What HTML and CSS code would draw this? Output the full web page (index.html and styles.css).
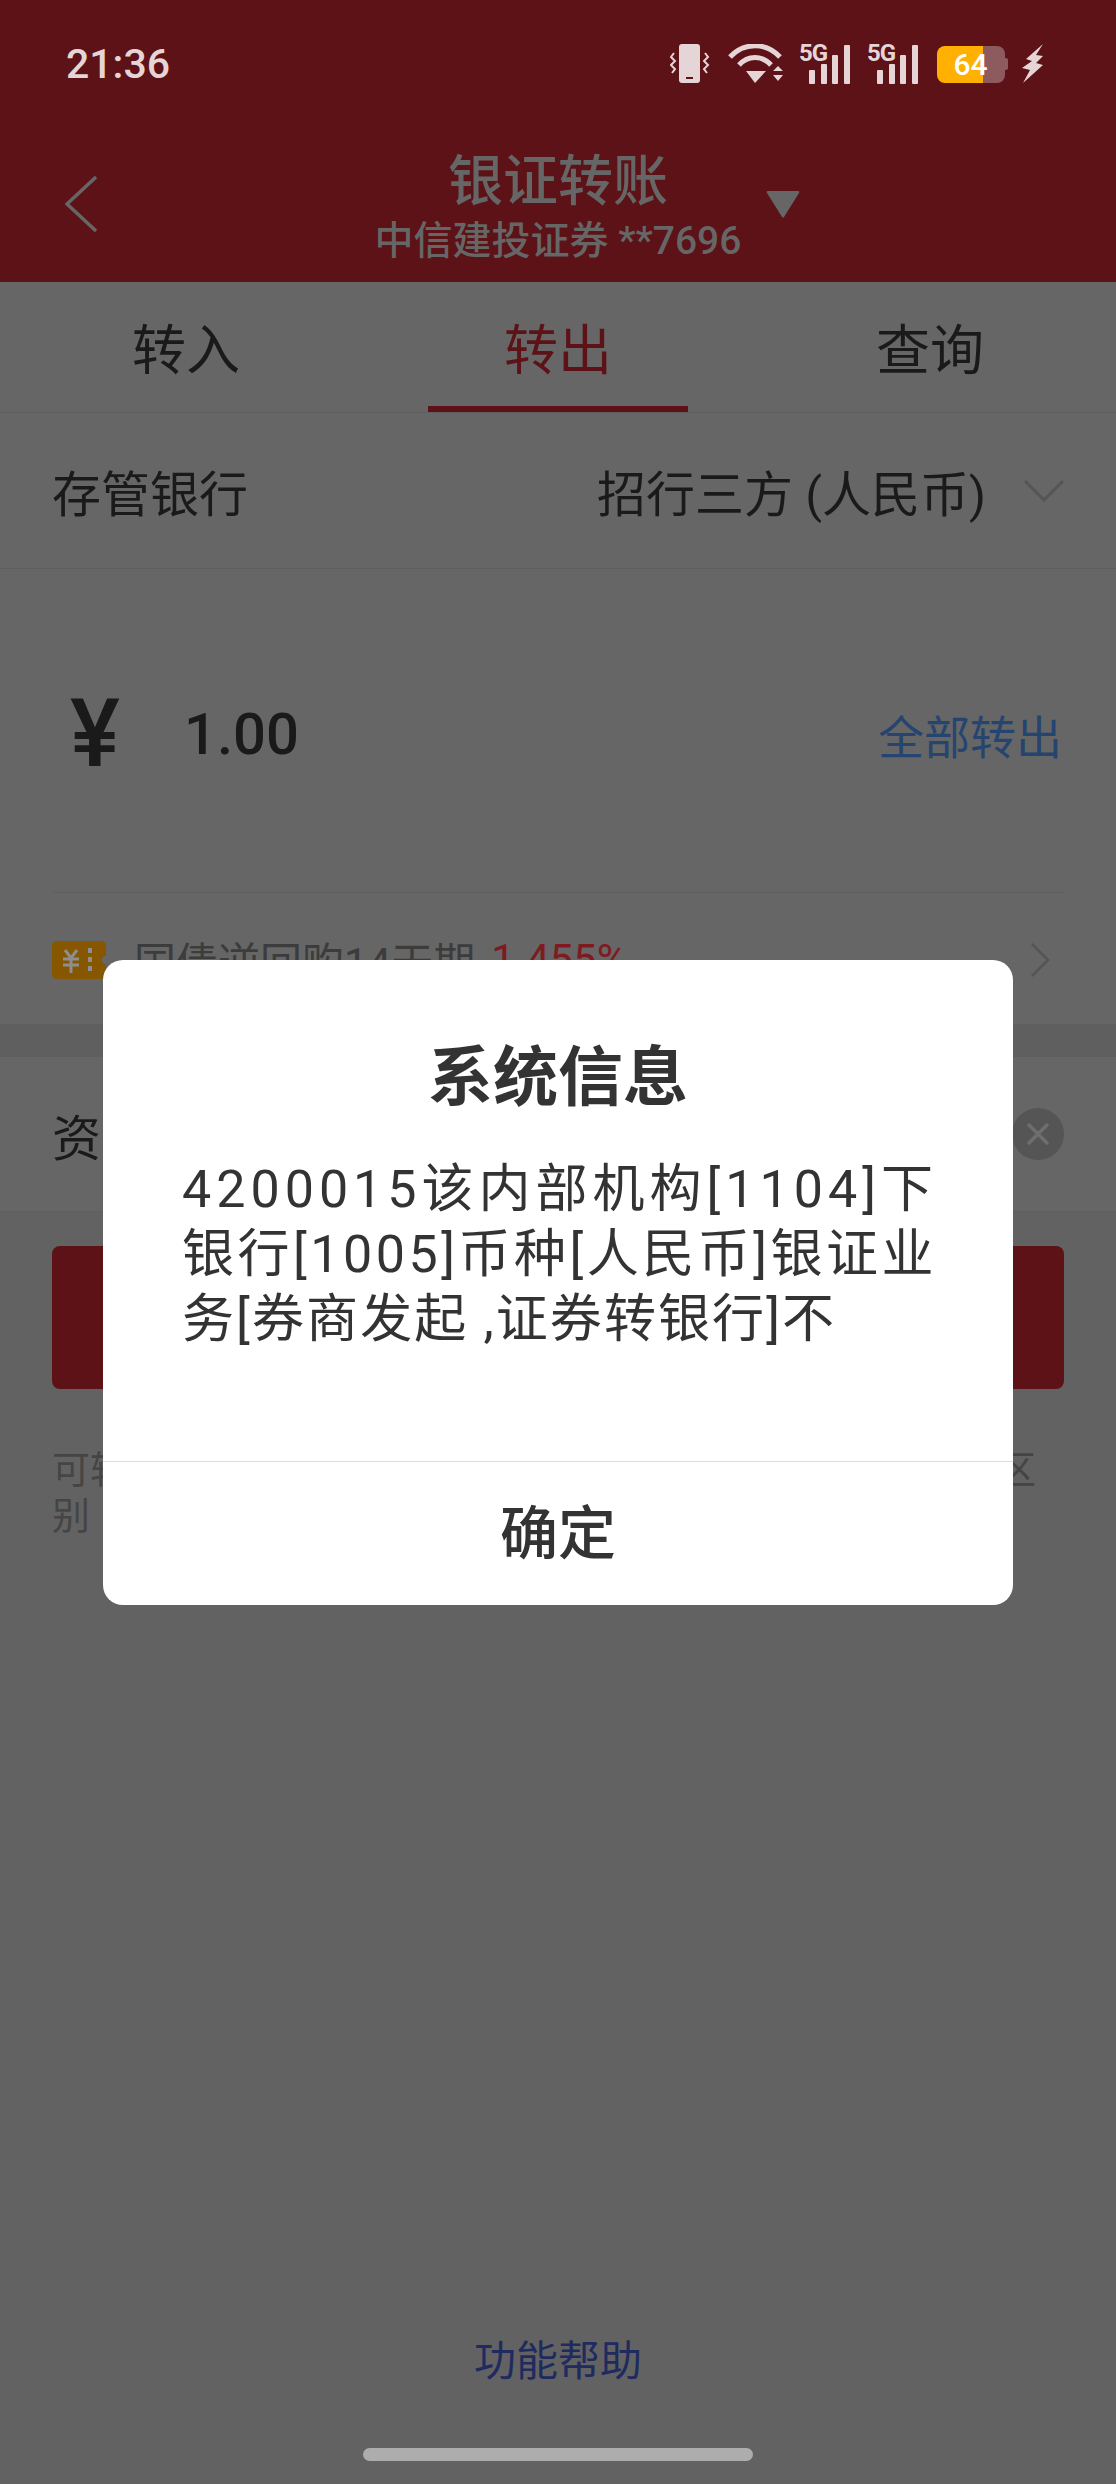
FILE: index.html
```html
<!DOCTYPE html>
<html lang="zh-CN">

<head>
    <meta charset="utf-8">
    <title>银证转账</title>
    <link rel="stylesheet" href="styles.css">
</head>

<body>
    <div class="page">
        <header class="header">
            <div class="status">
                <span class="time">21:36</span>
                <div class="status-icons">
                    <svg class="ic-vibrate" width="40" height="40" viewBox="0 0 40 40">
                        <rect x="9" y="0" width="21" height="39" rx="3" fill="#e5d5d7" />
                        <rect x="16" y="33" width="7" height="2" fill="#5c1216" />
                        <path d="M4 9 1 13l4 4-4 4 4 4-3 4M35 9l3 4-4 4 4 4-4 4 3 4" fill="none" stroke="#e5d5d7" stroke-width="2" />
                    </svg>
                    <svg class="ic-wifi" width="56" height="40" viewBox="0 0 56 40">
                        <path d="M2 13C16 -2 38 -2 52 13" fill="none" stroke="#e5d5d7" stroke-width="5" />
                        <path d="M11 21C20 11 34 11 43 21" fill="none" stroke="#e5d5d7" stroke-width="5" />
                        <path d="M18 27h20L27 39z" fill="#e5d5d7" />
                        <path d="M45 27h10l-5-5zM45 31h10l-5 6z" fill="#e5d5d7" />
                    </svg>
                    <div class="signal">
                        <span class="signal-type">5G</span>
                        <i class="bar b1"></i><i class="bar b2"></i><i class="bar b3"></i><i class="bar b4"></i>
                    </div>
                    <div class="signal">
                        <span class="signal-type">5G</span>
                        <i class="bar b1"></i><i class="bar b2"></i><i class="bar b3"></i><i class="bar b4"></i>
                    </div>
                    <div class="battery">
                        <div class="battery-body"><span class="battery-num">64</span></div>
                        <i class="battery-nub"></i>
                    </div>
                    <svg class="ic-bolt" width="22" height="40" viewBox="0 0 22 40">
                        <path d="M21 0 4 15l6 2L0 24l8 2-7 13 20-18-7-2 7-7-7-1z" fill="#e5d5d7" />
                    </svg>
                </div>
            </div>
            <div class="nav">
                <div class="nav-left">
                    <svg width="32" height="56" viewBox="0 0 32 56">
                        <path d="M31 1 2 28l29 27" fill="none" stroke="#666" stroke-width="3.5" />
                    </svg>
                </div>
                <div class="nav-title">
                    <div class="title">银证转账</div>
                    <div class="subtitle">中信建投证券 **7696</div>
                </div>
                <div class="nav-right">
                    <svg width="34" height="28" viewBox="0 0 34 28">
                        <path d="M2 1h30q2 0 1 2L18 27q-1 1-2 0L1 3Q0 1 2 1z" fill="#666" />
                    </svg>
                </div>
            </div>
        </header>

        <div class="tabs">
            <div class="tab"><span class="tab-text">转入</span></div>
            <div class="tab active"><span class="tab-text">转出</span><i class="tab-bar"></i></div>
            <div class="tab"><span class="tab-text">查询</span></div>
        </div>

        <div class="bank-row">
            <span class="label">存管银行</span>
            <div class="bank-value">
                <span>招行三方 (人民币)</span>
                <svg width="40" height="22" viewBox="0 0 40 22">
                    <path d="M1 1l19 19L39 1" fill="none" stroke="#555" stroke-width="3" />
                </svg>
            </div>
        </div>

        <div class="amount-row">
            <div class="amount">
                <span class="yen">¥</span>
                <span class="money">1.00</span>
            </div>
            <span class="all-out">全部转出</span>
        </div>

        <div class="ticket-row">
            <svg class="ticket" width="54" height="38" viewBox="0 0 54 38">
                <path d="M5 0h44q5 0 5 5v10a4 4 0 0 0 0 8v10q0 5-5 5H5q-5 0-5-5V5q0-5 5-5z" fill="#865600" />
                <path d="M13 9l6 8 6-8M11 18h16M11 24h16M19 17v15" fill="none" stroke="#8e8e8e" stroke-width="3" />
                <path d="M38 7v5M38 16v5M38 25v5" stroke="#8e8e8e" stroke-width="4" />
            </svg>
            <span class="ticket-name">国债逆回购14天期</span>
            <span class="ticket-rate">1.455%</span>
            <svg class="ticket-go" width="20" height="34" viewBox="0 0 20 34">
                <path d="M2 1l16 16L2 33" fill="none" stroke="#555" stroke-width="2.5" />
            </svg>
        </div>

        <div class="band"></div>

        <div class="pwd-row">
            <span class="label">资</span>
            <svg width="52" height="52" viewBox="0 0 52 52">
                <circle cx="26" cy="26" r="26" fill="#555" />
                <path d="M17 17l18 18M35 17 17 35" stroke="#6e6e6e" stroke-width="3.5" stroke-linecap="round" />
            </svg>
        </div>

        <div class="lower">
            <div class="submit"></div>
            <div class="note">
                <div class="note-line"><span>可转</span><span>区</span></div>
                <div class="note-line"><span>别</span></div>
            </div>
            <div class="help">功能帮助</div>
            <i class="home-bar"></i>
        </div>

        <div class="dialog">
            <div class="dialog-title">系统信息</div>
            <div class="dialog-msg">
                <span class="msg-line l1">4200015该内部机构[1104]下</span>
                <span class="msg-line l2">银行[1005]币种[人民币]银证业</span>
                <span class="msg-line l3">务[券商发起 ,证券转银行]不</span>
            </div>
            <div class="dialog-btn">确定</div>
        </div>
    </div>
</body>

</html>
```

FILE: styles.css
```css
* {
    box-sizing: border-box;
}

body {
    margin: 0;
    background: #626262;
    font-family: Roboto, "Noto Sans CJK SC", sans-serif;
}

.page {
    position: relative;
    width: 1116px;
    height: 2484px;
    display: flex;
    flex-direction: column;
    background: #666;
    color: #1a1a1a;
    overflow: hidden;
}

/* header + status bar */
.header {
    height: 282px;
    background: #5c1216;
}

.status {
    height: 128px;
    padding: 0 72px 0 66px;
    display: flex;
    align-items: center;
    justify-content: space-between;
    color: #e5d5d7;
}

.time {
    font-size: 41px;
    font-weight: 500;
}

.status-icons {
    display: flex;
    align-items: center;
}

.ic-wifi {
    margin-left: 18px;
}

.signal {
    position: relative;
    width: 52px;
    height: 40px;
    margin-left: 15px;
}

.signal + .signal {
    margin-left: 16px;
}

.signal-type {
    position: absolute;
    left: 0;
    top: -4px;
    font-size: 24px;
    line-height: 26px;
    font-weight: 700;
    letter-spacing: -1px;
}

.bar {
    position: absolute;
    bottom: 0;
    width: 6px;
    background: #e5d5d7;
    border-radius: 1px;
}

.b1 {
    left: 10px;
    height: 14px;
}

.b2 {
    left: 22px;
    height: 20px;
}

.b3 {
    left: 33px;
    height: 29px;
}

.b4 {
    left: 45px;
    height: 39px;
}

.battery {
    display: flex;
    align-items: center;
    margin-left: 18px;
}

.battery-body {
    width: 68px;
    height: 37px;
    border-radius: 8px;
    background: linear-gradient(90deg, #ffb000 46px, #8d5a5e 46px);
    text-align: center;
}

.battery-num {
    display: block;
    padding-right: 1px;
    color: #fff;
    font-size: 30px;
    line-height: 37px;
    font-weight: 500;
}

.battery-nub {
    width: 3px;
    height: 12px;
    background: #8d5a5e;
    border-radius: 0 2px 2px 0;
}

.ic-bolt {
    margin-left: 14px;
}

.nav {
    display: grid;
    grid-template-columns: 1fr auto 1fr;
    padding-top: 19px;
    color: #666;
}

.nav-left {
    padding: 29px 0 0 65px;
}

.nav-right {
    padding: 43px 0 0 25px;
}

.nav-title {
    text-align: center;
}

.title {
    margin-top: 3px;
    font-size: 55px;
    line-height: 62px;
    font-weight: 500;
}

.subtitle {
    margin-top: 7px;
    font-size: 39px;
    line-height: 44px;
    font-weight: 500;
}

/* tabs */
.tabs {
    height: 131px;
    display: flex;
    border-bottom: 1px solid #5f5f5f;
}

.tab {
    flex: 1;
    display: flex;
    flex-direction: column;
    align-items: center;
    padding-top: 8px;
    font-size: 54px;
}

.tab-text {
    height: 116px;
    line-height: 124px;
}

.tab.active {
    color: #5c1216;
}

.tab-bar {
    width: 260px;
    height: 6px;
    background: #5c1216;
}

/* form rows */
.label {
    font-size: 49px;
}

.bank-row {
    height: 156px;
    padding: 0 52px;
    display: flex;
    align-items: center;
    justify-content: space-between;
    border-bottom: 1px solid #5f5f5f;
}

.bank-value {
    display: flex;
    align-items: center;
    font-size: 49px;
}

.bank-value svg {
    margin-left: 38px;
}

.amount-row {
    height: 324px;
    margin: 0 52px 0 52px;
    padding-top: 6px;
    display: flex;
    align-items: center;
    justify-content: space-between;
    border-bottom: 1px solid #5f5f5f;
}

.amount {
    display: flex;
    align-items: center;
}

.yen {
    width: 132px;
    padding-left: 18px;
    font-size: 94px;
    font-weight: 500;
    line-height: 100px;
}

.money {
    font-size: 58px;
    font-weight: 500;
}

.all-out {
    padding-right: 2px;
    color: #254570;
    font-size: 46px;
}

.ticket-row {
    height: 131px;
    padding: 2px 66px 0 52px;
    display: flex;
    align-items: center;
    font-size: 42px;
    color: #3c3c3c;
}

.ticket-name {
    margin-left: 28px;
}

.ticket-rate {
    margin-left: 16px;
    color: #7e1a20;
}

.ticket-go {
    margin-left: auto;
}

.band {
    height: 33px;
    background: #5f5f5f;
}

.pwd-row {
    height: 155px;
    padding: 0 52px;
    display: flex;
    align-items: center;
    justify-content: space-between;
    border-bottom: 1px solid #5f5f5f;
}

.lower {
    flex: 1;
    display: flex;
    flex-direction: column;
    background: #626262;
}

.submit {
    height: 143px;
    margin: 34px 52px 0;
    border-radius: 8px;
    background: #5c1216;
}

.note {
    margin: 58px 80px 0 52px;
    font-size: 38px;
    line-height: 46px;
    color: #454545;
}

.note-line {
    display: flex;
    justify-content: space-between;
}

.help {
    margin-top: auto;
    color: #1f2b5e;
    font-size: 42px;
    line-height: 50px;
    text-align: center;
}

.home-bar {
    align-self: center;
    width: 390px;
    height: 13px;
    margin: 61px 0 23px;
    border-radius: 7px;
    background: #adadad;
}

/* dialog */
.dialog {
    position: absolute;
    left: 103px;
    top: 960px;
    width: 910px;
    height: 645px;
    display: flex;
    flex-direction: column;
    border-radius: 20px;
    background: #fff;
    color: #333;
}

.dialog-title {
    margin-top: 82px;
    font-size: 65px;
    line-height: 72px;
    font-weight: 700;
    text-align: center;
}

.dialog-msg {
    margin-top: 43px;
    padding: 0 79px;
    font-size: 52px;
    line-height: 65px;
}

.msg-line {
    display: block;
    white-space: nowrap;
}

/* the app spreads each full line out to the dialog width */
.l1 {
    letter-spacing: 5px;
}

.l2 {
    letter-spacing: 3.5px;
}

.l3 {
    letter-spacing: 2.1px;
}

.dialog-btn {
    margin-top: auto;
    height: 144px;
    border-top: 1px solid #dcdcdc;
    font-size: 58px;
    font-weight: 500;
    line-height: 144px;
    text-align: center;
}
```
